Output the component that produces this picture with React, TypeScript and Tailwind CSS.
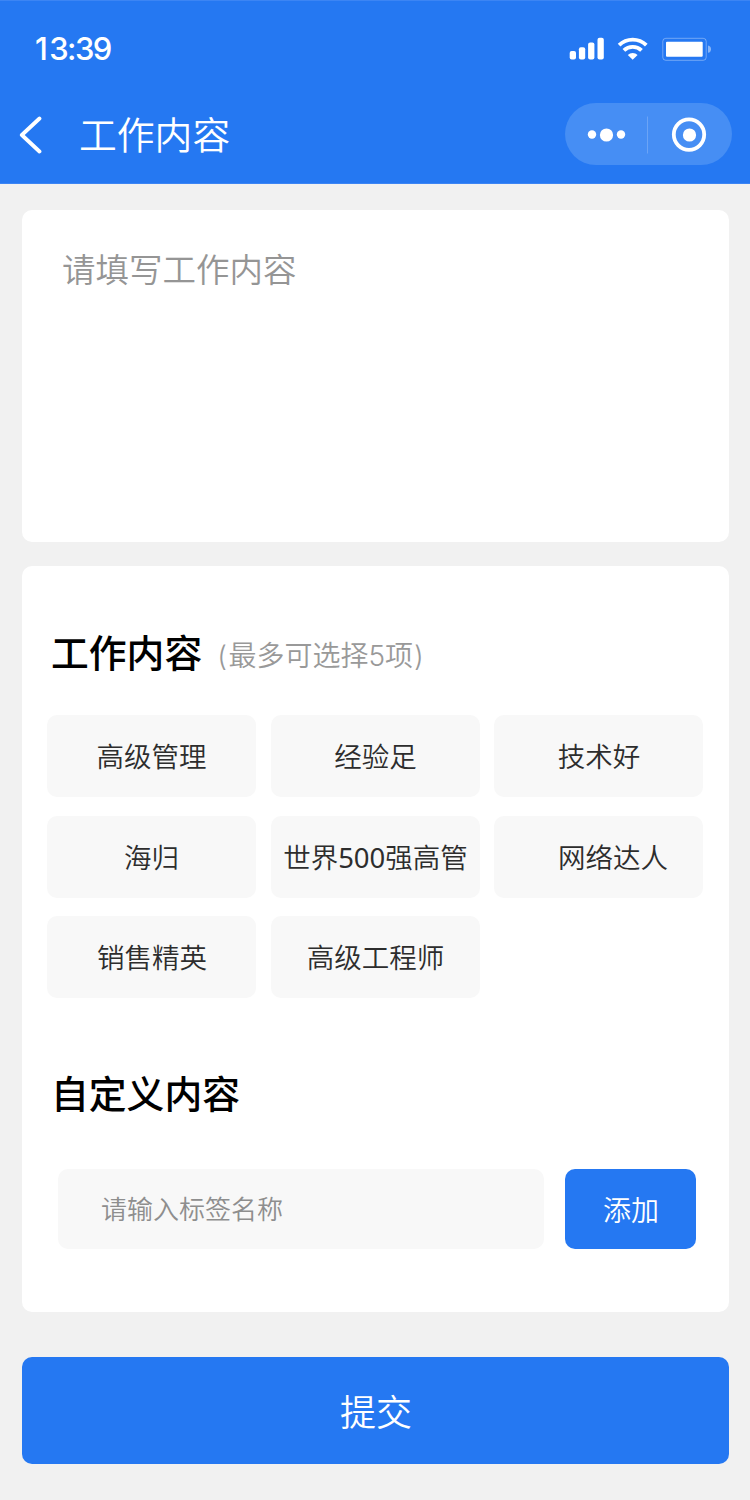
import { useState } from "react";

const TAGS = [
  { label: "高级管理", pad: "" },
  { label: "经验足", pad: "pl-px" },
  { label: "技术好", pad: "pl-px" },
  { label: "海归", pad: "" },
  { label: "世界500强高管", pad: "pl-px" },
  { label: "网络达人", pad: "pl-[29px]" },
  { label: "销售精英", pad: "pl-px" },
  { label: "高级工程师", pad: "pl-px" },
];

function StatusIcons() {
  return (
    <svg className="h-7 w-[146px]" viewBox="0 0 146 28" fill="none">
      <g fill="#fff">
        <rect x="4.7" y="17" width="6.3" height="8.6" rx="2" />
        <rect x="13.9" y="13.2" width="6.3" height="12.4" rx="2" />
        <rect x="23.1" y="8.5" width="6.3" height="17.1" rx="2" />
        <rect x="32.5" y="3.7" width="6.3" height="21.9" rx="2" />
      </g>
      <g stroke="#fff" strokeWidth="3.8">
        <path d="M54.1 11.2a19.4 19.4 0 0 1 27.2 0" />
        <path d="M58.9 16.4a12.5 12.5 0 0 1 17.6 0" />
      </g>
      <path d="M67.7 25.8 62.8 21a7 7 0 0 1 9.8 0z" fill="#fff" />
      <rect x="97.8" y="4.3" width="43.4" height="22" rx="3" stroke="#fff" strokeOpacity="0.35" />
      <rect x="101" y="7.8" width="36.7" height="15" rx="1" fill="#fff" />
      <path d="M143 11.6c2 .3 3 1.6 3 3.6s-1 3.3-3 3.6z" fill="#fff" fillOpacity="0.45" />
    </svg>
  );
}

function Header() {
  return (
    <header className="flex h-[184px] flex-col border-y border-[#3c85f4] bg-[#2578f2] text-white">
      <div className="flex h-[94px] items-center justify-between pr-[39px] pl-[35px]">
        <span className="pt-px font-['Inter',sans-serif] text-[31px] leading-none font-medium tracking-[-1.6px]">
          <span className="mr-[3px]">1</span>3:39
        </span>
        <StatusIcons />
      </div>
      <div className="flex h-[78px] items-center pr-[18px] pl-[18px]">
        <svg className="h-10 w-6" viewBox="0 0 24 40" fill="none" stroke="#fff" strokeWidth="3.8" strokeLinecap="round" strokeLinejoin="round">
          <path d="M21.5 4.5 3.8 21 21.5 37.5" />
        </svg>
        <h1 className="ml-[37px] pb-0.5 text-[37.8px] leading-none font-[350]">工作内容</h1>
        <div className="ml-auto flex h-[62px] w-[167px] items-center rounded-full bg-[#468ef4]">
          <svg className="h-[62px] w-[167px]" viewBox="0 0 167 62" fill="none">
            <circle cx="27" cy="31.5" r="4.2" fill="#fff" />
            <circle cx="41.5" cy="32" r="6.6" fill="#fff" />
            <circle cx="56" cy="31.5" r="4.2" fill="#fff" />
            <path d="M82.5 13.5v37" stroke="#fff" strokeOpacity="0.2" />
            <circle cx="124" cy="31.6" r="15.2" stroke="#fff" strokeWidth="3.8" />
            <circle cx="124.5" cy="32" r="6.6" fill="#fff" />
          </svg>
        </div>
      </div>
    </header>
  );
}

function TagLabel({ text }: { text: string }) {
  return (
    <span>
      {text.split(/(\d+)/).map((part, i) =>
        /^\d+$/.test(part) ? (
          <span key={i} className="font-normal">
            {part}
          </span>
        ) : (
          part
        ),
      )}
    </span>
  );
}

export default function App() {
  const [content, setContent] = useState("");
  const [tag, setTag] = useState("");

  return (
    <div className="min-h-[1500px] w-[750px] bg-[#f1f1f1] font-['Noto_Sans_CJK_SC',sans-serif]">
      <Header />
      <main className="pt-[26px] pr-[21px] pl-[22px]">
        <textarea
          value={content}
          onChange={(e) => setContent(e.target.value)}
          placeholder="请填写工作内容"
          className="block h-[332px] w-full resize-none rounded-[10px] bg-white pt-[34px] pr-10 pl-10 text-[33.5px] leading-[48px] font-[350] outline-none placeholder:text-[#959595]"
        />

        <section className="mt-6 h-[746px] rounded-[10px] bg-white pt-[57px] pr-[26px] pl-[25px]">
          <div className="flex h-14 items-center pl-1">
            <h2 className="text-[37.8px] leading-none font-medium">工作内容</h2>
            <span className="mt-[9px] ml-[15px] font-['Inter','Noto_Sans_CJK_SC',sans-serif] text-[28px] leading-none text-[#999]">
              <span className="mr-[1.5px] font-light">(</span>
              <span className="font-[350]">最多可选择</span>
              <span className="font-light">5</span>
              <span className="font-[350]">项</span>
              <span className="ml-px font-light">)</span>
            </span>
          </div>
          <div className="mt-9 grid grid-cols-3 gap-x-[14.5px] gap-y-[18.5px]">
            {TAGS.map((t) => (
              <button
                key={t.label}
                className={`flex h-[82px] items-center justify-center rounded-[10px] bg-[#f8f8f8] pt-[2px] font-['Noto_Sans','Noto_Sans_CJK_SC',sans-serif] text-[27.5px] leading-none font-[350] whitespace-nowrap text-[#2d2d2d] ${t.pad}`}
              >
                <TagLabel text={t.label} />
              </button>
            ))}
          </div>
          <h2 className="mt-[66px] flex h-14 items-center pl-1 text-[37.8px] leading-none font-medium">自定义内容</h2>
          <div className="mt-[49px] flex justify-between pr-[7px] pl-[11px]">
            <input
              value={tag}
              onChange={(e) => setTag(e.target.value)}
              placeholder="请输入标签名称"
              className="h-20 w-[486px] rounded-[10px] bg-[#f8f8f8] px-[43px] pb-[3px] text-[26px] font-[350] outline-none placeholder:text-[#8e8e8e]"
            />
            <button className="h-20 w-[131px] rounded-[10px] bg-[#2578f2] pl-px text-[28px] leading-none font-[350] text-white">
              添加
            </button>
          </div>
        </section>

        <button className="mt-[45px] block h-[107px] w-full rounded-[10px] bg-[#2578f2] pb-0.5 pl-px text-[36px] leading-none font-[350] text-white">
          提交
        </button>
      </main>
    </div>
  );
}
